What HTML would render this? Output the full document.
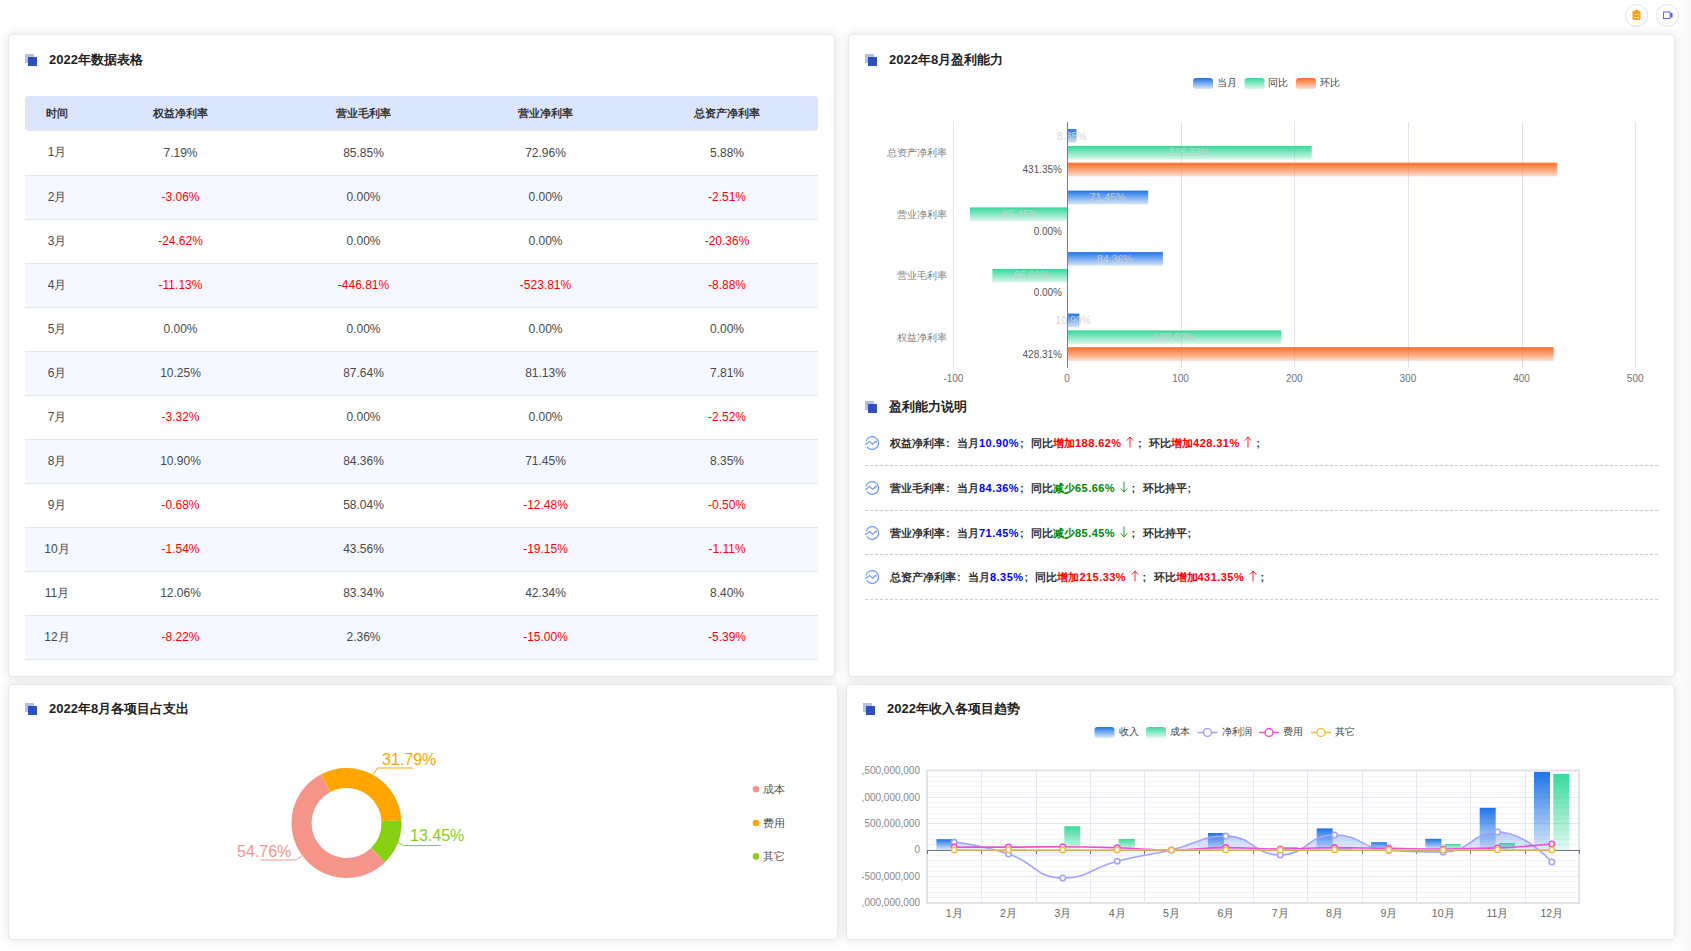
<!DOCTYPE html>
<html><head><meta charset="utf-8"><style>
*{margin:0;padding:0;box-sizing:border-box}
html,body{width:1691px;height:951px;overflow:hidden;background:#fff;font-family:"Liberation Sans", sans-serif}
.abs{position:absolute}
.panel{position:absolute;background:#fff;border:1px solid #e3e8f3;border-radius:4px;box-shadow:0 0 12px rgba(0,0,0,0.11)}
.ic{position:absolute;width:9px;height:9px;background:#b3bfe6}
.ic2{position:absolute;width:9px;height:9px;background:#2548b8;opacity:.95}
.ttl{position:absolute;font-size:13px;font-weight:bold;color:#222;white-space:nowrap;line-height:16px}
.btn{position:absolute;width:23px;height:23px;border:1px solid #dcdfe6;border-radius:50%;background:#fff}
table.t{position:absolute;left:25px;top:96px;width:793px;border-collapse:collapse;table-layout:fixed}
table.t th{height:35px;background:#dbe5fc;font-size:10.5px;font-weight:bold;color:#333;text-align:center}
table.t th:first-child{border-radius:4px 0 0 4px}
table.t th:last-child{border-radius:0 4px 4px 0}
table.t td{height:44px;font-size:12px;color:#4a4a4a;text-align:center;border-bottom:1px solid #e1e6ee}
table.t tr:nth-child(odd) td{background:#f5f8fe}
table.t td.r{color:#f00}

.desc{position:absolute;font-size:11px;font-weight:bold;color:#333;white-space:nowrap;line-height:16px}
.dash{position:absolute;width:793px;height:1px;background:repeating-linear-gradient(90deg,#c6cad2 0 3px,transparent 3px 5px)}
svg text{font-family:"Liberation Sans",sans-serif}

.n{letter-spacing:0.45px}
.pc{font-style:normal;display:inline-block;width:12px;text-align:left;padding-left:1px}
.arr{display:inline-block;vertical-align:-1px;margin:0 3px 0 4.5px}
</style></head>
<body><div class="abs" style="left:1677px;top:0;width:14px;height:951px;background:linear-gradient(90deg,rgba(0,0,0,0),rgba(0,0,0,0.03))"></div><div class="btn" style="left:1625px;top:4px"></div><div class="btn" style="left:1656px;top:4px"></div><div class="panel" style="left:8px;top:34px;width:827px;height:643px"></div><div class="panel" style="left:848px;top:34px;width:827px;height:643px"></div><div class="panel" style="left:8px;top:684px;width:830px;height:256px"></div><div class="panel" style="left:846px;top:684px;width:829px;height:256px"></div><div class="ic" style="left:25px;top:54px"></div><div class="ic2" style="left:28px;top:57px"></div><div class="ttl" style="left:49px;top:52px">2022年数据表格</div><div class="ic" style="left:865px;top:54px"></div><div class="ic2" style="left:868px;top:57px"></div><div class="ttl" style="left:889px;top:52px">2022年8月盈利能力</div><div class="ic" style="left:865px;top:401px"></div><div class="ic2" style="left:868px;top:404px"></div><div class="ttl" style="left:889px;top:399px">盈利能力说明</div><div class="ic" style="left:25px;top:703px"></div><div class="ic2" style="left:28px;top:706px"></div><div class="ttl" style="left:49px;top:701px">2022年8月各项目占支出</div><div class="ic" style="left:863px;top:703px"></div><div class="ic2" style="left:866px;top:706px"></div><div class="ttl" style="left:887px;top:701px">2022年收入各项目趋势</div><table class="t"><colgroup><col style="width:64px"><col style="width:183px"><col style="width:183px"><col style="width:181px"><col style="width:182px"></colgroup><tr><th>时间</th><th>权益净利率</th><th>营业毛利率</th><th>营业净利率</th><th>总资产净利率</th></tr><tr><td>1月</td><td>7.19%</td><td>85.85%</td><td>72.96%</td><td>5.88%</td></tr><tr><td>2月</td><td class="r">-3.06%</td><td>0.00%</td><td>0.00%</td><td class="r">-2.51%</td></tr><tr><td>3月</td><td class="r">-24.62%</td><td>0.00%</td><td>0.00%</td><td class="r">-20.36%</td></tr><tr><td>4月</td><td class="r">-11.13%</td><td class="r">-446.81%</td><td class="r">-523.81%</td><td class="r">-8.88%</td></tr><tr><td>5月</td><td>0.00%</td><td>0.00%</td><td>0.00%</td><td>0.00%</td></tr><tr><td>6月</td><td>10.25%</td><td>87.64%</td><td>81.13%</td><td>7.81%</td></tr><tr><td>7月</td><td class="r">-3.32%</td><td>0.00%</td><td>0.00%</td><td class="r">-2.52%</td></tr><tr><td>8月</td><td>10.90%</td><td>84.36%</td><td>71.45%</td><td>8.35%</td></tr><tr><td>9月</td><td class="r">-0.68%</td><td>58.04%</td><td class="r">-12.48%</td><td class="r">-0.50%</td></tr><tr><td>10月</td><td class="r">-1.54%</td><td>43.56%</td><td class="r">-19.15%</td><td class="r">-1.11%</td></tr><tr><td>11月</td><td>12.06%</td><td>83.34%</td><td>42.34%</td><td>8.40%</td></tr><tr><td>12月</td><td class="r">-8.22%</td><td>2.36%</td><td class="r">-15.00%</td><td class="r">-5.39%</td></tr></table><svg class="abs" style="left:0;top:0" width="1691" height="951"><defs>
<linearGradient id="gB" x1="0" y1="0" x2="0" y2="1"><stop offset="0" stop-color="#1f74e8"/><stop offset="1" stop-color="#1f74e8" stop-opacity="0.18"/></linearGradient>
<linearGradient id="gG" x1="0" y1="0" x2="0" y2="1"><stop offset="0" stop-color="#36d79a"/><stop offset="1" stop-color="#36d79a" stop-opacity="0.18"/></linearGradient>
<linearGradient id="gO" x1="0" y1="0" x2="0" y2="1"><stop offset="0" stop-color="#ff6b26"/><stop offset="1" stop-color="#ff6b26" stop-opacity="0.22"/></linearGradient>
</defs><rect x="1193" y="78" width="20" height="11" rx="3" fill="url(#gB)"/><text x="1216.5" y="86" font-size="10" fill="#444">当月</text><rect x="1244.5" y="78" width="20" height="11" rx="3" fill="url(#gG)"/><text x="1268.0" y="86" font-size="10" fill="#444">同比</text><rect x="1296" y="78" width="20" height="11" rx="3" fill="url(#gO)"/><text x="1319.5" y="86" font-size="10" fill="#444">环比</text><line x1="953.5" y1="122.0" x2="953.5" y2="368.0" stroke="#e0e6f1" stroke-width="1"/><line x1="1181.5" y1="122.0" x2="1181.5" y2="368.0" stroke="#e0e6f1" stroke-width="1"/><line x1="1294.5" y1="122.0" x2="1294.5" y2="368.0" stroke="#e0e6f1" stroke-width="1"/><line x1="1408.5" y1="122.0" x2="1408.5" y2="368.0" stroke="#e0e6f1" stroke-width="1"/><line x1="1522.5" y1="122.0" x2="1522.5" y2="368.0" stroke="#e0e6f1" stroke-width="1"/><line x1="1635.5" y1="122.0" x2="1635.5" y2="368.0" stroke="#e0e6f1" stroke-width="1"/><text x="953.4" y="382" font-size="10" fill="#6e7079" text-anchor="middle">-100</text><text x="1067.0" y="382" font-size="10" fill="#6e7079" text-anchor="middle">0</text><text x="1180.6" y="382" font-size="10" fill="#6e7079" text-anchor="middle">100</text><text x="1294.3" y="382" font-size="10" fill="#6e7079" text-anchor="middle">200</text><text x="1407.9" y="382" font-size="10" fill="#6e7079" text-anchor="middle">300</text><text x="1521.6" y="382" font-size="10" fill="#6e7079" text-anchor="middle">400</text><text x="1635.2" y="382" font-size="10" fill="#6e7079" text-anchor="middle">500</text><text x="947" y="156.2" font-size="10" fill="#808080" text-anchor="end">总资产净利率</text><rect x="1067.0" y="129.1" width="9.5" height="13.7" fill="url(#gB)"/><rect x="1067.0" y="145.9" width="244.7" height="13.7" fill="url(#gG)"/><rect x="1067.0" y="162.7" width="490.2" height="13.7" fill="url(#gO)"/><text x="1071.7" y="139.5" font-size="10.5" fill="#d0d0d0" fill-opacity="0.9" text-anchor="middle">8.35%</text><text x="1189.4" y="156.3" font-size="10.5" fill="#d0d0d0" fill-opacity="0.9" text-anchor="middle">215.33%</text><text x="1062" y="173.1" font-size="10" fill="#555" text-anchor="end">431.35%</text><text x="947" y="217.8" font-size="10" fill="#808080" text-anchor="end">营业净利率</text><rect x="1067.0" y="190.6" width="81.2" height="13.7" fill="url(#gB)"/><rect x="969.9" y="207.4" width="97.1" height="13.7" fill="url(#gG)"/><text x="1107.6" y="201.0" font-size="10.5" fill="#d0d0d0" fill-opacity="0.9" text-anchor="middle">71.45%</text><text x="1018.4" y="217.8" font-size="10.5" fill="#d0d0d0" fill-opacity="0.9" text-anchor="middle">-85.45%</text><text x="1062" y="234.6" font-size="10" fill="#555" text-anchor="end">0.00%</text><text x="947" y="279.2" font-size="10" fill="#808080" text-anchor="end">营业毛利率</text><rect x="1067.0" y="252.1" width="95.9" height="13.7" fill="url(#gB)"/><rect x="992.4" y="268.9" width="74.6" height="13.7" fill="url(#gG)"/><text x="1114.9" y="262.6" font-size="10.5" fill="#d0d0d0" fill-opacity="0.9" text-anchor="middle">84.36%</text><text x="1029.7" y="279.4" font-size="10.5" fill="#d0d0d0" fill-opacity="0.9" text-anchor="middle">-65.66%</text><text x="1062" y="296.2" font-size="10" fill="#555" text-anchor="end">0.00%</text><text x="947" y="340.8" font-size="10" fill="#808080" text-anchor="end">权益净利率</text><rect x="1067.0" y="313.6" width="12.4" height="13.7" fill="url(#gB)"/><rect x="1067.0" y="330.4" width="214.3" height="13.7" fill="url(#gG)"/><rect x="1067.0" y="347.2" width="486.7" height="13.7" fill="url(#gO)"/><text x="1073.2" y="324.1" font-size="10.5" fill="#d0d0d0" fill-opacity="0.9" text-anchor="middle">10.90%</text><text x="1174.2" y="340.9" font-size="10.5" fill="#d0d0d0" fill-opacity="0.9" text-anchor="middle">188.62%</text><text x="1062" y="357.7" font-size="10" fill="#555" text-anchor="end">428.31%</text><line x1="1067.5" y1="122.0" x2="1067.5" y2="368.0" stroke="#7c7e86" stroke-width="1"/></svg><div class="abs" style="left:865px;top:436px;width:14px;height:14px"><svg width="14" height="14" viewBox="0 0 14 14" style="position:absolute;left:0;top:0"><path d="M1.02 5.34 A6.4 6.4 0 1 1 1.66 10.2" fill="none" stroke="#6d98f8" stroke-width="1.15"/><path d="M0.4 8.7 L4.5 5.4 L7.6 8.4 L10.4 5.9" fill="none" stroke="#6d98f8" stroke-width="1.2" stroke-linejoin="round"/><path d="M9.2 5.0 L11.8 4.6 L11.4 7.2 Z" fill="#6d98f8"/></svg></div><div class="desc" style="left:890px;top:435px">权益净利率<i class="pc">:</i>当月<span class="n" style="color:#00f">10.90%</span><i class="pc">;</i>同比<span style="color:#f00">增加<span class="n">188.62%</span></span><svg class="arr" width="8" height="12" viewBox="0 0 8 12"><path d="M4 1 L4 11.5 M0.8 4.6 L4 1 L7.2 4.6" fill="none" stroke="#f00" stroke-width="0.85"/></svg><i class="pc">;</i>环比<span style="color:#f00">增加<span class="n">428.31%</span></span><svg class="arr" width="8" height="12" viewBox="0 0 8 12"><path d="M4 1 L4 11.5 M0.8 4.6 L4 1 L7.2 4.6" fill="none" stroke="#f00" stroke-width="0.85"/></svg><i class="pc">;</i></div><div class="dash" style="left:865px;top:465px"></div><div class="abs" style="left:865px;top:481px;width:14px;height:14px"><svg width="14" height="14" viewBox="0 0 14 14" style="position:absolute;left:0;top:0"><path d="M1.02 5.34 A6.4 6.4 0 1 1 1.66 10.2" fill="none" stroke="#6d98f8" stroke-width="1.15"/><path d="M0.4 8.7 L4.5 5.4 L7.6 8.4 L10.4 5.9" fill="none" stroke="#6d98f8" stroke-width="1.2" stroke-linejoin="round"/><path d="M9.2 5.0 L11.8 4.6 L11.4 7.2 Z" fill="#6d98f8"/></svg></div><div class="desc" style="left:890px;top:480px">营业毛利率<i class="pc">:</i>当月<span class="n" style="color:#00f">84.36%</span><i class="pc">;</i>同比<span style="color:#080">减少<span class="n">65.66%</span></span><svg class="arr" width="8" height="12" viewBox="0 0 8 12"><path d="M4 0.5 L4 11 M0.8 7.4 L4 11 L7.2 7.4" fill="none" stroke="#080" stroke-width="0.85"/></svg><i class="pc">;</i>环比持平<i class="pc">;</i></div><div class="dash" style="left:865px;top:510px"></div><div class="abs" style="left:865px;top:525.5px;width:14px;height:14px"><svg width="14" height="14" viewBox="0 0 14 14" style="position:absolute;left:0;top:0"><path d="M1.02 5.34 A6.4 6.4 0 1 1 1.66 10.2" fill="none" stroke="#6d98f8" stroke-width="1.15"/><path d="M0.4 8.7 L4.5 5.4 L7.6 8.4 L10.4 5.9" fill="none" stroke="#6d98f8" stroke-width="1.2" stroke-linejoin="round"/><path d="M9.2 5.0 L11.8 4.6 L11.4 7.2 Z" fill="#6d98f8"/></svg></div><div class="desc" style="left:890px;top:524.5px">营业净利率<i class="pc">:</i>当月<span class="n" style="color:#00f">71.45%</span><i class="pc">;</i>同比<span style="color:#080">减少<span class="n">85.45%</span></span><svg class="arr" width="8" height="12" viewBox="0 0 8 12"><path d="M4 0.5 L4 11 M0.8 7.4 L4 11 L7.2 7.4" fill="none" stroke="#080" stroke-width="0.85"/></svg><i class="pc">;</i>环比持平<i class="pc">;</i></div><div class="dash" style="left:865px;top:554px"></div><div class="abs" style="left:865px;top:570px;width:14px;height:14px"><svg width="14" height="14" viewBox="0 0 14 14" style="position:absolute;left:0;top:0"><path d="M1.02 5.34 A6.4 6.4 0 1 1 1.66 10.2" fill="none" stroke="#6d98f8" stroke-width="1.15"/><path d="M0.4 8.7 L4.5 5.4 L7.6 8.4 L10.4 5.9" fill="none" stroke="#6d98f8" stroke-width="1.2" stroke-linejoin="round"/><path d="M9.2 5.0 L11.8 4.6 L11.4 7.2 Z" fill="#6d98f8"/></svg></div><div class="desc" style="left:890px;top:569px">总资产净利率<i class="pc">:</i>当月<span class="n" style="color:#00f">8.35%</span><i class="pc">;</i>同比<span style="color:#f00">增加<span class="n">215.33%</span></span><svg class="arr" width="8" height="12" viewBox="0 0 8 12"><path d="M4 1 L4 11.5 M0.8 4.6 L4 1 L7.2 4.6" fill="none" stroke="#f00" stroke-width="0.85"/></svg><i class="pc">;</i>环比<span style="color:#f00">增加<span class="n">431.35%</span></span><svg class="arr" width="8" height="12" viewBox="0 0 8 12"><path d="M4 1 L4 11.5 M0.8 4.6 L4 1 L7.2 4.6" fill="none" stroke="#f00" stroke-width="0.85"/></svg><i class="pc">;</i></div><div class="dash" style="left:865px;top:599px"></div><svg class="abs" style="left:0;top:0" width="1691" height="951"><path d="M401.42 820.12 A55.0 55.0 0 0 1 385.10 862.17 L371.07 847.93 A35.0 35.0 0 0 0 381.45 821.17 Z" fill="#88d013"/><path d="M385.10 862.17 A55.0 55.0 0 1 1 321.15 774.19 L330.37 791.94 A35.0 35.0 0 1 0 371.07 847.93 Z" fill="#f5958a"/><path d="M321.15 774.19 A55.0 55.0 0 0 1 401.42 820.12 L381.45 821.17 A35.0 35.0 0 0 0 330.37 791.94 Z" fill="#ffa500"/><polyline points="373,774.5 377.5,768 413,768" fill="none" stroke="#ffa500" stroke-width="1"/><text x="382" y="764.5" font-size="16" fill="#ffa500">31.79%</text><polyline points="398,842.5 404,845.5 441,845.5" fill="none" stroke="#88d013" stroke-width="1"/><text x="410" y="840.5" font-size="16" fill="#88d013">13.45%</text><polyline points="302.5,855.5 296,860 260,860" fill="none" stroke="#f5958a" stroke-width="1"/><text x="237" y="857" font-size="16" fill="#f5958a">54.76%</text><circle cx="756" cy="789.2" r="3.3" fill="#f5958a"/><text x="763" y="793.0" font-size="10.5" fill="#555">成本</text><circle cx="756" cy="823" r="3.3" fill="#ffa500"/><text x="763" y="826.8" font-size="10.5" fill="#555">费用</text><circle cx="756" cy="856.4" r="3.3" fill="#88d013"/><text x="763" y="860.2" font-size="10.5" fill="#555">其它</text><defs>
<linearGradient id="tB" x1="0" y1="0" x2="0" y2="1"><stop offset="0" stop-color="#1f74e8"/><stop offset="1" stop-color="#1f74e8" stop-opacity="0.15"/></linearGradient>
<linearGradient id="tG" x1="0" y1="0" x2="0" y2="1"><stop offset="0" stop-color="#3ad99c"/><stop offset="1" stop-color="#3ad99c" stop-opacity="0.15"/></linearGradient>
<linearGradient id="tA" gradientUnits="userSpaceOnUse" x1="0" y1="832" x2="0" y2="878"><stop offset="0" stop-color="#5a8ef0" stop-opacity="0.45"/><stop offset="0.58" stop-color="#5a8ef0" stop-opacity="0"/></linearGradient>
<clipPath id="ylc"><rect x="862" y="750" width="70" height="170"/></clipPath>
</defs><rect x="1094.5" y="727" width="20" height="11" rx="3" fill="url(#tB)"/><text x="1118.5" y="735" font-size="10" fill="#444">收入</text><rect x="1146" y="727" width="20" height="11" rx="3" fill="url(#tG)"/><text x="1169.5" y="735" font-size="10" fill="#444">成本</text><line x1="1197.5" y1="732.5" x2="1217.5" y2="732.5" stroke="#a3a3ff" stroke-width="1.5"/><circle cx="1207.5" cy="732.5" r="4" fill="#fff" stroke="#a3a3ff" stroke-width="1.5"/><text x="1221.5" y="735" font-size="10" fill="#444">净利润</text><line x1="1259" y1="732.5" x2="1279" y2="732.5" stroke="#f050d0" stroke-width="1.5"/><circle cx="1269" cy="732.5" r="4" fill="#fff" stroke="#f050d0" stroke-width="1.5"/><text x="1283.2" y="735" font-size="10" fill="#444">费用</text><line x1="1311" y1="732.5" x2="1331" y2="732.5" stroke="#f2be4a" stroke-width="1.5"/><circle cx="1321" cy="732.5" r="4" fill="#fff" stroke="#f2be4a" stroke-width="1.5"/><text x="1335.2" y="735" font-size="10" fill="#444">其它</text><line x1="927.0" y1="770.5" x2="1579.0" y2="770.5" stroke="#e4e8f0" stroke-width="1"/><line x1="927.0" y1="776.5" x2="1579.0" y2="776.5" stroke="#f3f5f9" stroke-width="1"/><line x1="927.0" y1="781.5" x2="1579.0" y2="781.5" stroke="#f3f5f9" stroke-width="1"/><line x1="927.0" y1="786.5" x2="1579.0" y2="786.5" stroke="#f3f5f9" stroke-width="1"/><line x1="927.0" y1="792.5" x2="1579.0" y2="792.5" stroke="#f3f5f9" stroke-width="1"/><line x1="927.0" y1="797.5" x2="1579.0" y2="797.5" stroke="#e4e8f0" stroke-width="1"/><line x1="927.0" y1="802.5" x2="1579.0" y2="802.5" stroke="#f3f5f9" stroke-width="1"/><line x1="927.0" y1="807.5" x2="1579.0" y2="807.5" stroke="#f3f5f9" stroke-width="1"/><line x1="927.0" y1="813.5" x2="1579.0" y2="813.5" stroke="#f3f5f9" stroke-width="1"/><line x1="927.0" y1="818.5" x2="1579.0" y2="818.5" stroke="#f3f5f9" stroke-width="1"/><line x1="927.0" y1="823.5" x2="1579.0" y2="823.5" stroke="#e4e8f0" stroke-width="1"/><line x1="927.0" y1="829.5" x2="1579.0" y2="829.5" stroke="#f3f5f9" stroke-width="1"/><line x1="927.0" y1="834.5" x2="1579.0" y2="834.5" stroke="#f3f5f9" stroke-width="1"/><line x1="927.0" y1="839.5" x2="1579.0" y2="839.5" stroke="#f3f5f9" stroke-width="1"/><line x1="927.0" y1="844.5" x2="1579.0" y2="844.5" stroke="#f3f5f9" stroke-width="1"/><line x1="927.0" y1="850.5" x2="1579.0" y2="850.5" stroke="#e4e8f0" stroke-width="1"/><line x1="927.0" y1="855.5" x2="1579.0" y2="855.5" stroke="#f3f5f9" stroke-width="1"/><line x1="927.0" y1="860.5" x2="1579.0" y2="860.5" stroke="#f3f5f9" stroke-width="1"/><line x1="927.0" y1="866.5" x2="1579.0" y2="866.5" stroke="#f3f5f9" stroke-width="1"/><line x1="927.0" y1="871.5" x2="1579.0" y2="871.5" stroke="#f3f5f9" stroke-width="1"/><line x1="927.0" y1="876.5" x2="1579.0" y2="876.5" stroke="#e4e8f0" stroke-width="1"/><line x1="927.0" y1="881.5" x2="1579.0" y2="881.5" stroke="#f3f5f9" stroke-width="1"/><line x1="927.0" y1="887.5" x2="1579.0" y2="887.5" stroke="#f3f5f9" stroke-width="1"/><line x1="927.0" y1="892.5" x2="1579.0" y2="892.5" stroke="#f3f5f9" stroke-width="1"/><line x1="927.0" y1="897.5" x2="1579.0" y2="897.5" stroke="#f3f5f9" stroke-width="1"/><line x1="927.0" y1="902.5" x2="1579.0" y2="902.5" stroke="#e4e8f0" stroke-width="1"/><line x1="981.5" y1="770.5" x2="981.5" y2="903.0" stroke="#e3e8f1" stroke-width="1"/><line x1="1036.5" y1="770.5" x2="1036.5" y2="903.0" stroke="#e3e8f1" stroke-width="1"/><line x1="1090.5" y1="770.5" x2="1090.5" y2="903.0" stroke="#e3e8f1" stroke-width="1"/><line x1="1144.5" y1="770.5" x2="1144.5" y2="903.0" stroke="#e3e8f1" stroke-width="1"/><line x1="1199.5" y1="770.5" x2="1199.5" y2="903.0" stroke="#e3e8f1" stroke-width="1"/><line x1="1253.5" y1="770.5" x2="1253.5" y2="903.0" stroke="#e3e8f1" stroke-width="1"/><line x1="1307.5" y1="770.5" x2="1307.5" y2="903.0" stroke="#e3e8f1" stroke-width="1"/><line x1="1362.5" y1="770.5" x2="1362.5" y2="903.0" stroke="#e3e8f1" stroke-width="1"/><line x1="1416.5" y1="770.5" x2="1416.5" y2="903.0" stroke="#e3e8f1" stroke-width="1"/><line x1="1470.5" y1="770.5" x2="1470.5" y2="903.0" stroke="#e3e8f1" stroke-width="1"/><line x1="1525.5" y1="770.5" x2="1525.5" y2="903.0" stroke="#e3e8f1" stroke-width="1"/><rect x="927.0" y="770.5" width="652.0" height="132.5" fill="none" stroke="#e0e3ea" stroke-width="2"/><g clip-path="url(#ylc)"><text x="920" y="774.1" font-size="10" fill="#888" text-anchor="end">1,500,000,000</text><text x="920" y="800.5" font-size="10" fill="#888" text-anchor="end">1,000,000,000</text><text x="920" y="826.9" font-size="10" fill="#888" text-anchor="end">500,000,000</text><text x="920" y="853.3" font-size="10" fill="#888" text-anchor="end">0</text><text x="920" y="879.7" font-size="10" fill="#888" text-anchor="end">-500,000,000</text><text x="920" y="906.1" font-size="10" fill="#888" text-anchor="end">-1,000,000,000</text></g><text x="954.2" y="916.8" font-size="10.5" fill="#666" text-anchor="middle">1月</text><text x="1008.5" y="916.8" font-size="10.5" fill="#666" text-anchor="middle">2月</text><text x="1062.8" y="916.8" font-size="10.5" fill="#666" text-anchor="middle">3月</text><text x="1117.2" y="916.8" font-size="10.5" fill="#666" text-anchor="middle">4月</text><text x="1171.5" y="916.8" font-size="10.5" fill="#666" text-anchor="middle">5月</text><text x="1225.8" y="916.8" font-size="10.5" fill="#666" text-anchor="middle">6月</text><text x="1280.2" y="916.8" font-size="10.5" fill="#666" text-anchor="middle">7月</text><text x="1334.5" y="916.8" font-size="10.5" fill="#666" text-anchor="middle">8月</text><text x="1388.8" y="916.8" font-size="10.5" fill="#666" text-anchor="middle">9月</text><text x="1443.2" y="916.8" font-size="10.5" fill="#666" text-anchor="middle">10月</text><text x="1497.5" y="916.8" font-size="10.5" fill="#666" text-anchor="middle">11月</text><text x="1551.8" y="916.8" font-size="10.5" fill="#666" text-anchor="middle">12月</text><rect x="936.4" y="839.2" width="16" height="10.8" fill="url(#tB)"/><rect x="1010.0" y="848.9" width="16" height="1.1" fill="url(#tG)"/><rect x="1064.3" y="826.2" width="16" height="23.8" fill="url(#tG)"/><rect x="1118.7" y="838.9" width="16" height="11.1" fill="url(#tG)"/><rect x="1208.0" y="833.0" width="16" height="17.0" fill="url(#tB)"/><rect x="1281.7" y="847.0" width="16" height="3.0" fill="url(#tG)"/><rect x="1316.7" y="828.4" width="16" height="21.6" fill="url(#tB)"/><rect x="1336.0" y="847.6" width="16" height="2.4" fill="url(#tG)"/><rect x="1371.0" y="842.2" width="16" height="7.8" fill="url(#tB)"/><rect x="1390.3" y="847.9" width="16" height="2.1" fill="url(#tG)"/><rect x="1425.4" y="838.8" width="16" height="11.2" fill="url(#tB)"/><rect x="1444.7" y="843.9" width="16" height="6.1" fill="url(#tG)"/><rect x="1479.7" y="807.8" width="16" height="42.2" fill="url(#tB)"/><rect x="1499.0" y="843.0" width="16" height="7.0" fill="url(#tG)"/><rect x="1534.0" y="771.9" width="16" height="78.1" fill="url(#tB)"/><rect x="1553.3" y="774.0" width="16" height="76.0" fill="url(#tG)"/><path d="M954.17 842.08 C954.17 842.08 982.23 845.28 1008.50 853.96 C1036.56 863.23 1035.07 877.98 1062.83 877.98 C1089.41 877.98 1089.66 868.28 1117.17 861.19 C1144.00 854.28 1144.48 856.24 1171.50 850.00 C1198.81 843.70 1199.00 836.11 1225.83 836.11 C1253.34 836.11 1253.09 854.91 1280.17 854.91 C1307.43 854.91 1307.01 834.95 1334.50 834.95 C1361.34 834.95 1361.14 848.88 1388.83 850.53 C1415.47 852.11 1416.86 852.11 1443.17 852.11 C1471.20 852.11 1471.27 832.05 1497.50 832.05 C1525.60 832.05 1551.83 861.99 1551.83 861.99 L1551.83 850.0 L954.17 850.0 Z" fill="url(#tA)"/><line x1="927.0" y1="850.5" x2="1579.0" y2="850.5" stroke="#6e7079" stroke-width="1"/><line x1="927.5" y1="850.0" x2="927.5" y2="854.0" stroke="#6e7079" stroke-width="1"/><line x1="981.5" y1="850.0" x2="981.5" y2="854.0" stroke="#6e7079" stroke-width="1"/><line x1="1036.5" y1="850.0" x2="1036.5" y2="854.0" stroke="#6e7079" stroke-width="1"/><line x1="1090.5" y1="850.0" x2="1090.5" y2="854.0" stroke="#6e7079" stroke-width="1"/><line x1="1144.5" y1="850.0" x2="1144.5" y2="854.0" stroke="#6e7079" stroke-width="1"/><line x1="1199.5" y1="850.0" x2="1199.5" y2="854.0" stroke="#6e7079" stroke-width="1"/><line x1="1253.5" y1="850.0" x2="1253.5" y2="854.0" stroke="#6e7079" stroke-width="1"/><line x1="1307.5" y1="850.0" x2="1307.5" y2="854.0" stroke="#6e7079" stroke-width="1"/><line x1="1362.5" y1="850.0" x2="1362.5" y2="854.0" stroke="#6e7079" stroke-width="1"/><line x1="1416.5" y1="850.0" x2="1416.5" y2="854.0" stroke="#6e7079" stroke-width="1"/><line x1="1470.5" y1="850.0" x2="1470.5" y2="854.0" stroke="#6e7079" stroke-width="1"/><line x1="1525.5" y1="850.0" x2="1525.5" y2="854.0" stroke="#6e7079" stroke-width="1"/><line x1="1579.5" y1="850.0" x2="1579.5" y2="854.0" stroke="#6e7079" stroke-width="1"/><path d="M954.17 842.08 C954.17 842.08 982.23 845.28 1008.50 853.96 C1036.56 863.23 1035.07 877.98 1062.83 877.98 C1089.41 877.98 1089.66 868.28 1117.17 861.19 C1144.00 854.28 1144.48 856.24 1171.50 850.00 C1198.81 843.70 1199.00 836.11 1225.83 836.11 C1253.34 836.11 1253.09 854.91 1280.17 854.91 C1307.43 854.91 1307.01 834.95 1334.50 834.95 C1361.34 834.95 1361.14 848.88 1388.83 850.53 C1415.47 852.11 1416.86 852.11 1443.17 852.11 C1471.20 852.11 1471.27 832.05 1497.50 832.05 C1525.60 832.05 1551.83 861.99 1551.83 861.99" fill="none" stroke="#a3a3ff" stroke-width="1.6"/><path d="M954.17 847.10 C954.17 847.10 981.33 847.10 1008.50 847.10 C1035.67 847.10 1035.67 846.73 1062.83 846.73 C1090.00 846.73 1090.01 846.96 1117.17 847.78 C1144.34 848.60 1144.34 850.00 1171.50 850.00 C1198.67 850.00 1198.66 847.62 1225.83 847.62 C1252.99 847.62 1253.00 849.00 1280.17 849.00 C1307.33 849.00 1307.33 847.62 1334.50 847.62 C1361.66 847.62 1361.67 847.97 1388.83 848.31 C1416.00 848.65 1416.00 849.00 1443.17 849.00 C1470.34 849.00 1470.36 849.00 1497.50 847.89 C1524.70 846.78 1551.83 844.03 1551.83 844.03" fill="none" stroke="#f050d0" stroke-width="1.6"/><path d="M954.17 850.00 C954.17 850.00 981.33 850.00 1008.50 850.00 C1035.67 850.00 1035.67 850.00 1062.83 850.00 C1090.00 850.00 1090.00 850.00 1117.17 850.00 C1144.33 850.00 1144.33 850.00 1171.50 850.00 C1198.67 850.00 1198.67 850.00 1225.83 850.00 C1253.00 850.00 1253.00 850.00 1280.17 850.00 C1307.33 850.00 1307.33 850.00 1334.50 850.00 C1361.67 850.00 1361.67 850.00 1388.83 850.00 C1416.00 850.00 1416.00 850.00 1443.17 850.00 C1470.33 850.00 1470.33 850.00 1497.50 850.00 C1524.67 850.00 1551.83 850.00 1551.83 850.00" fill="none" stroke="#f2be4a" stroke-width="1.6"/><circle cx="954.2" cy="842.1" r="2.7" fill="#fff" stroke="#a3a3ff" stroke-width="1.6"/><circle cx="1008.5" cy="854.0" r="2.7" fill="#fff" stroke="#a3a3ff" stroke-width="1.6"/><circle cx="1062.8" cy="878.0" r="2.7" fill="#fff" stroke="#a3a3ff" stroke-width="1.6"/><circle cx="1117.2" cy="861.2" r="2.7" fill="#fff" stroke="#a3a3ff" stroke-width="1.6"/><circle cx="1171.5" cy="850.0" r="2.7" fill="#fff" stroke="#a3a3ff" stroke-width="1.6"/><circle cx="1225.8" cy="836.1" r="2.7" fill="#fff" stroke="#a3a3ff" stroke-width="1.6"/><circle cx="1280.2" cy="854.9" r="2.7" fill="#fff" stroke="#a3a3ff" stroke-width="1.6"/><circle cx="1334.5" cy="835.0" r="2.7" fill="#fff" stroke="#a3a3ff" stroke-width="1.6"/><circle cx="1388.8" cy="850.5" r="2.7" fill="#fff" stroke="#a3a3ff" stroke-width="1.6"/><circle cx="1443.2" cy="852.1" r="2.7" fill="#fff" stroke="#a3a3ff" stroke-width="1.6"/><circle cx="1497.5" cy="832.0" r="2.7" fill="#fff" stroke="#a3a3ff" stroke-width="1.6"/><circle cx="1551.8" cy="862.0" r="2.7" fill="#fff" stroke="#a3a3ff" stroke-width="1.6"/><circle cx="954.2" cy="847.1" r="2.7" fill="#fff" stroke="#f050d0" stroke-width="1.6"/><circle cx="1008.5" cy="847.1" r="2.7" fill="#fff" stroke="#f050d0" stroke-width="1.6"/><circle cx="1062.8" cy="846.7" r="2.7" fill="#fff" stroke="#f050d0" stroke-width="1.6"/><circle cx="1117.2" cy="847.8" r="2.7" fill="#fff" stroke="#f050d0" stroke-width="1.6"/><circle cx="1171.5" cy="850.0" r="2.7" fill="#fff" stroke="#f050d0" stroke-width="1.6"/><circle cx="1225.8" cy="847.6" r="2.7" fill="#fff" stroke="#f050d0" stroke-width="1.6"/><circle cx="1280.2" cy="849.0" r="2.7" fill="#fff" stroke="#f050d0" stroke-width="1.6"/><circle cx="1334.5" cy="847.6" r="2.7" fill="#fff" stroke="#f050d0" stroke-width="1.6"/><circle cx="1388.8" cy="848.3" r="2.7" fill="#fff" stroke="#f050d0" stroke-width="1.6"/><circle cx="1443.2" cy="849.0" r="2.7" fill="#fff" stroke="#f050d0" stroke-width="1.6"/><circle cx="1497.5" cy="847.9" r="2.7" fill="#fff" stroke="#f050d0" stroke-width="1.6"/><circle cx="1551.8" cy="844.0" r="2.7" fill="#fff" stroke="#f050d0" stroke-width="1.6"/><circle cx="954.2" cy="850.0" r="2.7" fill="#fff" stroke="#f2be4a" stroke-width="1.6"/><circle cx="1008.5" cy="850.0" r="2.7" fill="#fff" stroke="#f2be4a" stroke-width="1.6"/><circle cx="1062.8" cy="850.0" r="2.7" fill="#fff" stroke="#f2be4a" stroke-width="1.6"/><circle cx="1117.2" cy="850.0" r="2.7" fill="#fff" stroke="#f2be4a" stroke-width="1.6"/><circle cx="1171.5" cy="850.0" r="2.7" fill="#fff" stroke="#f2be4a" stroke-width="1.6"/><circle cx="1225.8" cy="850.0" r="2.7" fill="#fff" stroke="#f2be4a" stroke-width="1.6"/><circle cx="1280.2" cy="850.0" r="2.7" fill="#fff" stroke="#f2be4a" stroke-width="1.6"/><circle cx="1334.5" cy="850.0" r="2.7" fill="#fff" stroke="#f2be4a" stroke-width="1.6"/><circle cx="1388.8" cy="850.0" r="2.7" fill="#fff" stroke="#f2be4a" stroke-width="1.6"/><circle cx="1443.2" cy="850.0" r="2.7" fill="#fff" stroke="#f2be4a" stroke-width="1.6"/><circle cx="1497.5" cy="850.0" r="2.7" fill="#fff" stroke="#f2be4a" stroke-width="1.6"/><circle cx="1551.8" cy="850.0" r="2.7" fill="#fff" stroke="#f2be4a" stroke-width="1.6"/></svg><svg class="abs" style="left:1630px;top:8px" width="13" height="14" viewBox="0 0 13 14"><rect x="2.5" y="3" width="8" height="9" rx="1" fill="#ffa21a"/><rect x="4.5" y="1.8" width="4" height="2" rx="1" fill="#ffa21a"/><rect x="4" y="6" width="5" height="1" fill="#ffd58a"/><rect x="4" y="9" width="5" height="1" fill="#fff"/></svg><svg class="abs" style="left:1661px;top:8px" width="13" height="14" viewBox="0 0 13 14"><rect x="2.5" y="4" width="6.5" height="6.5" fill="none" stroke="#7a5cff" stroke-width="1"/><rect x="9.5" y="5" width="2" height="4.5" fill="#3b5bff"/></svg></body></html>
